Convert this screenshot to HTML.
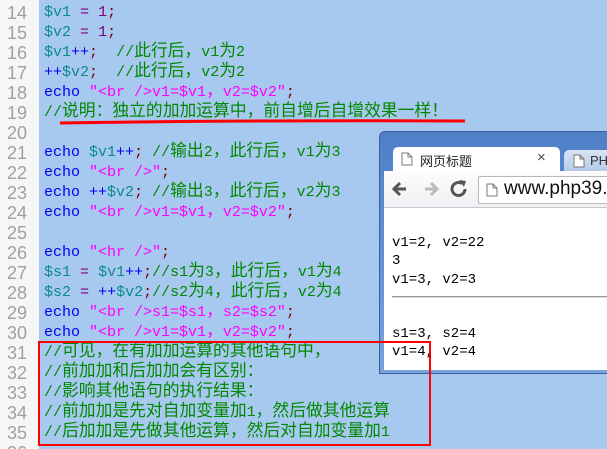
<!DOCTYPE html>
<html><head><meta charset="utf-8"><style>
html,body{margin:0;padding:0;width:607px;height:449px;overflow:hidden;background:#a8c9ef;position:relative}
#g{position:absolute;left:0;top:0;width:39px;height:449px;background:#f6f6f6}
.ln{position:absolute;left:0;width:27px;text-align:right;color:#a0a0a0;font:18px "Liberation Sans",sans-serif;line-height:20px}
.cl{position:absolute;left:44px;white-space:pre;font:15px "Liberation Mono",monospace;line-height:20px;height:20px}
.c{font-family:"Noto Sans CJK SC","WenQuanYi Zen Hei",sans-serif;font-size:16.8px;line-height:0}
.v{color:#0a8a8a}.p{color:#800080}.s{color:#7a0000}.k{color:#0000ee}.q{color:#ff00ff}.m{color:#008800}
#win{position:absolute;left:379px;top:131px;width:227px;height:241px;background:linear-gradient(#4f7fc8,#7aa2dc);border:1px solid #3a5f9a;border-right:none;border-radius:6px 0 0 0}
#tab{position:absolute;left:393px;top:147px;width:167px;height:24px;background:#fff;border-radius:5px 5px 0 0;font:13px "Liberation Sans","Noto Sans CJK SC",sans-serif}
#tab2{position:absolute;left:564px;top:150px;width:43px;height:21px;overflow:hidden;background:linear-gradient(#d8e4f4,#b6cbe9);border-radius:5px 0 0 0;font:13px "Liberation Sans",sans-serif;color:#333}
#tb{position:absolute;left:384px;top:171px;width:223px;height:36px;background:linear-gradient(#fdfdfd,#eef0f3);border-bottom:1px solid #c9c9c9}
#addr{position:absolute;left:478px;top:176px;width:129px;height:26px;overflow:hidden;background:#fff;border:1px solid #b8b8b8;border-right:none;border-radius:2px 0 0 2px;font:19px "Liberation Sans",sans-serif;color:#111}
#body{position:absolute;left:384px;top:208px;width:223px;height:162px;background:#fff}
.o{position:absolute;left:392px;font:14px "Liberation Mono","Noto Sans CJK SC",monospace;line-height:18px;color:#000;white-space:pre}
</style></head><body>
<div id="g"></div>
<div class="ln" style="top:-17px">13</div>
<div class="ln" style="top:3px">14</div><div class="ln" style="top:23px">15</div><div class="ln" style="top:43px">16</div><div class="ln" style="top:63px">17</div><div class="ln" style="top:83px">18</div><div class="ln" style="top:103px">19</div><div class="ln" style="top:123px">20</div><div class="ln" style="top:143px">21</div><div class="ln" style="top:163px">22</div><div class="ln" style="top:183px">23</div><div class="ln" style="top:203px">24</div><div class="ln" style="top:223px">25</div><div class="ln" style="top:243px">26</div><div class="ln" style="top:263px">27</div><div class="ln" style="top:283px">28</div><div class="ln" style="top:303px">29</div><div class="ln" style="top:323px">30</div><div class="ln" style="top:343px">31</div><div class="ln" style="top:363px">32</div><div class="ln" style="top:383px">33</div><div class="ln" style="top:403px">34</div><div class="ln" style="top:423px">35</div><div class="ln" style="top:443px">36</div>

<div class="cl" style="top:3px"><span class="v">$v1</span> <span class="p">=</span> <span class="p">1</span><span class="s">;</span></div>
<div class="cl" style="top:23px"><span class="v">$v2</span> <span class="p">=</span> <span class="p">1</span><span class="s">;</span></div>
<div class="cl" style="top:43px"><span class="v">$v1</span><span class="k">++</span><span class="s">;</span>  <span class="m">//<span class="c">此行后，</span>v1<span class="c">为</span>2</span></div>
<div class="cl" style="top:63px"><span class="k">++</span><span class="v">$v2</span><span class="s">;</span>  <span class="m">//<span class="c">此行后，</span>v2<span class="c">为</span>2</span></div>
<div class="cl" style="top:83px"><span class="k">echo</span> <span class="q">"&lt;br /&gt;v1=$v1<span class="c">，</span>v2=$v2"</span><span class="s">;</span></div>
<div class="cl" style="top:103px"><span class="m">//<span class="c">说明：独立的加加运算中，前自增后自增效果一样！</span></span></div>
<div class="cl" style="top:143px"><span class="k">echo</span> <span class="v">$v1</span><span class="k">++</span><span class="s">;</span> <span class="m">//<span class="c">输出</span>2<span class="c">，此行后，</span>v1<span class="c">为</span>3</span></div>
<div class="cl" style="top:163px"><span class="k">echo</span> <span class="q">"&lt;br /&gt;"</span><span class="s">;</span></div>
<div class="cl" style="top:183px"><span class="k">echo</span> <span class="k">++</span><span class="v">$v2</span><span class="s">;</span> <span class="m">//<span class="c">输出</span>3<span class="c">，此行后，</span>v2<span class="c">为</span>3</span></div>
<div class="cl" style="top:203px"><span class="k">echo</span> <span class="q">"&lt;br /&gt;v1=$v1<span class="c">，</span>v2=$v2"</span><span class="s">;</span></div>
<div class="cl" style="top:243px"><span class="k">echo</span> <span class="q">"&lt;hr /&gt;"</span><span class="s">;</span></div>
<div class="cl" style="top:263px"><span class="v">$s1</span> <span class="p">=</span> <span class="v">$v1</span><span class="k">++</span><span class="s">;</span><span class="m">//s1<span class="c">为</span>3<span class="c">，此行后，</span>v1<span class="c">为</span>4</span></div>
<div class="cl" style="top:283px"><span class="v">$s2</span> <span class="p">=</span> <span class="k">++</span><span class="v">$v2</span><span class="s">;</span><span class="m">//s2<span class="c">为</span>4<span class="c">，此行后，</span>v2<span class="c">为</span>4</span></div>
<div class="cl" style="top:303px"><span class="k">echo</span> <span class="q">"&lt;br /&gt;s1=$s1<span class="c">，</span>s2=$s2"</span><span class="s">;</span></div>
<div class="cl" style="top:323px"><span class="k">echo</span> <span class="q">"&lt;br /&gt;v1=$v1<span class="c">，</span>v2=$v2"</span><span class="s">;</span></div>
<div class="cl" style="top:343px"><span class="m">//<span class="c">可见，在有加加运算的其他语句中，</span></span></div>
<div class="cl" style="top:363px"><span class="m">//<span class="c">前加加和后加加会有区别：</span></span></div>
<div class="cl" style="top:383px"><span class="m">//<span class="c">影响其他语句的执行结果：</span></span></div>
<div class="cl" style="top:403px"><span class="m">//<span class="c">前加加是先对自加变量加</span>1<span class="c">，然后做其他运算</span></span></div>
<div class="cl" style="top:423px"><span class="m">//<span class="c">后加加是先做其他运算，然后对自加变量加</span>1</span></div>

<svg style="position:absolute;left:0;top:0" width="607" height="449">
<path d="M60 123 Q260 120 465 121" stroke="#f00" stroke-width="3" fill="none"/>
</svg>

<div id="win"></div>
<div id="tab"><svg style="position:absolute;left:8px;top:5px" width="12" height="14"><path d="M1 1H7L11 5V13H1Z M7 1V5H11" fill="#fff" stroke="#777"/></svg><span style="position:absolute;left:27px;top:4px;color:#222">网页标题</span><span style="position:absolute;left:144px;top:2px;color:#444;font-size:15px">×</span></div>
<div id="tab2"><svg style="position:absolute;left:9px;top:4px" width="12" height="14"><path d="M1 1H7L11 5V13H1Z M7 1V5H11" fill="#fff" stroke="#777"/></svg><span style="position:absolute;left:26px;top:3px">PHP</span></div>
<div id="tb">
<svg width="94" height="36" style="position:absolute;left:0;top:0">
<path d="M22 18H11M16 12L10 18L16 24" stroke="#555" stroke-width="3" fill="none"/>
<path d="M41 18H52M47 12L53 18L47 24" stroke="#bbb" stroke-width="3" fill="none"/>
<path d="M81 18A6.5 6.5 0 1 1 78 12.5" stroke="#555" stroke-width="3" fill="none"/><path d="M75 9L82 10L80 16Z" fill="#555"/>
</svg></div>
<div id="addr"><svg style="position:absolute;left:7px;top:6px" width="12" height="14"><path d="M1 1H7L11 5V13H1Z M7 1V5H11" fill="#fff" stroke="#777"/></svg><span style="position:absolute;left:25px;top:1px;white-space:nowrap">www.php39.com</span></div>
<div id="body"></div>
<div class="o" style="top:234px">v1=2, v2=22</div>
<div class="o" style="top:252px">3</div>
<div class="o" style="top:271px">v1=3, v2=3</div>
<div style="position:absolute;left:392px;top:296px;width:215px;height:1px;background:#999;border-bottom:1px solid #ddd"></div>
<div class="o" style="top:325px">s1=3, s2=4</div>
<div class="o" style="top:343px">v1=4, v2=4</div>

<div style="position:absolute;left:38px;top:341px;width:389px;height:101px;border:2px solid #f00"></div>
</body></html>
